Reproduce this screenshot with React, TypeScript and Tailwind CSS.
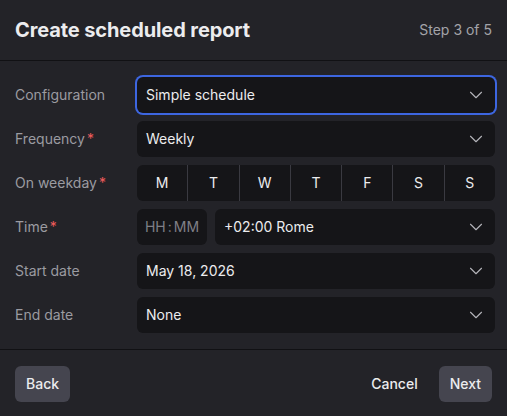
import { ChevronDown } from "lucide-react";

const labelCls = "w-[110px] shrink-0 text-sm text-[#9b9ba1]";
const fieldCls =
  "flex h-9 flex-1 items-center justify-between rounded-md bg-[#151518] pl-[9px] pr-2 text-sm text-[#ececee]";

function Label({ text, required }: { text: string; required?: boolean }) {
  return (
    <div className={labelCls}>
      {text}
      {required && <span className="ml-0.5 text-[#ef5b5b]">*</span>}
    </div>
  );
}

function Select({ value, focused }: { value: string; focused?: boolean }) {
  return (
    <div
      className={`${fieldCls} ${focused ? "ring-2 ring-[#3d66e0]" : ""}`}
    >
      <span>{value}</span>
      <ChevronDown className="h-[22px] w-[22px] text-[#b4b4ba]" strokeWidth={1.2} />
    </div>
  );
}

const days = ["M", "T", "W", "T", "F", "S", "S"];

export default function App() {
  return (
    <div
      className="flex h-[416px] w-[507px] flex-col bg-[#232328]"
      style={{ fontFamily: "Inter, 'Liberation Sans', sans-serif" }}
    >
      {/* Header */}
      <div className="flex h-[61px] items-center justify-between border-b border-[#111114] px-[15px]">
        <h1 className="text-[20px] font-bold tracking-[-0.1px] text-[#ececee]">
          Create scheduled report
        </h1>
        <span className="text-sm text-[#a3a3a9]">Step 3 of 5</span>
      </div>

      {/* Body */}
      <div className="flex flex-col gap-2 border-b border-[#111114] py-4 pl-[15px] pr-3">
        <div className="flex items-center gap-3">
          <Label text="Configuration" />
          <Select value="Simple schedule" focused />
        </div>
        <div className="flex items-center gap-3">
          <Label text="Frequency" required />
          <Select value="Weekly" />
        </div>
        <div className="flex items-center gap-3">
          <Label text="On weekday" required />
          <div className="flex h-9 flex-1 divide-x divide-[#3a3a41] rounded-md bg-[#151518]">
            {days.map((d, i) => (
              <div
                key={i}
                className="flex flex-1 items-center justify-center text-sm text-[#ececee]"
              >
                {d}
              </div>
            ))}
          </div>
        </div>
        <div className="flex items-center gap-3">
          <Label text="Time" required />
          <div className="flex flex-1 gap-2">
            <div className="flex h-9 w-[70px] items-center justify-center rounded-md bg-[#151518] text-sm text-[#7f7f86]">
              HH<span className="mx-0.5">:</span>MM
            </div>
            <Select value="+02:00 Rome" />
          </div>
        </div>
        <div className="flex items-center gap-3">
          <Label text="Start date" />
          <Select value="May 18, 2026" />
        </div>
        <div className="flex items-center gap-3">
          <Label text="End date" />
          <Select value="None" />
        </div>
      </div>

      {/* Footer */}
      <div className="flex items-center justify-between px-[15px] pt-4">
        <button className="h-9 rounded-md bg-[#45454f] px-[11px] text-sm font-medium text-[#ececee]">
          Back
        </button>
        <div className="flex items-center gap-[21px]">
          <button className="text-sm font-medium text-[#ececee]">Cancel</button>
          <button className="h-9 rounded-md bg-[#45454f] px-[11px] text-sm font-medium text-[#ececee]">
            Next
          </button>
        </div>
      </div>
    </div>
  );
}
